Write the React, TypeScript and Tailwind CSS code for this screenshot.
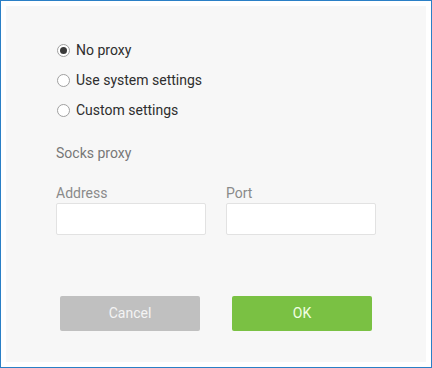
import React from "react";

const font = { fontFamily: "Roboto, 'Liberation Sans', sans-serif" };

function Radio({ label, checked }: { label: string; checked?: boolean }) {
  return (
    <label className="flex items-center h-5 cursor-pointer">
      <span className="w-[13px] h-[13px] rounded-full border border-[#a0a0a0] bg-white flex items-center justify-center ml-px">
        {checked && <span className="w-[7px] h-[7px] rounded-full bg-[#3a3a3a]" />}
      </span>
      <span className="ml-[6px] text-[14px] text-[#2e2e2e] leading-5">{label}</span>
    </label>
  );
}

function Field({ label }: { label: string }) {
  return (
    <div className="flex flex-col w-[150px]">
      <span className="text-[14px] leading-5 text-[#8a8a8a]">{label}</span>
      <input className="h-[32px] bg-white border border-[#e2e2e2] rounded-[2px] outline-none px-2 text-sm" />
    </div>
  );
}

export default function App() {
  return (
    <div className="w-[432px] h-[368px] border border-[#2a7fc6] bg-white p-[5px]" style={font}>
      <div className="w-full h-full bg-[#f7f7f7] pl-[50px] pt-[34px]">
        <div className="flex flex-col gap-[10px]">
          <Radio label="No proxy" checked />
          <Radio label="Use system settings" />
          <Radio label="Custom settings" />
        </div>
        <div className="mt-[23px] text-[14px] leading-5 text-[#777777]">Socks proxy</div>
        <div className="mt-[20px] flex gap-[20px]">
          <Field label="Address" />
          <Field label="Port" />
        </div>
        <div className="mt-[61px] flex gap-[32px] pl-[4px]">
          <button className="w-[140px] h-[35px] rounded-[2px] bg-[#c0c0c0] text-[14px] text-[#f4f4f4]">Cancel</button>
          <button className="w-[140px] h-[35px] rounded-[2px] bg-[#7ac143] text-[14px] text-[#f2ffe4]">OK</button>
        </div>
      </div>
    </div>
  );
}
